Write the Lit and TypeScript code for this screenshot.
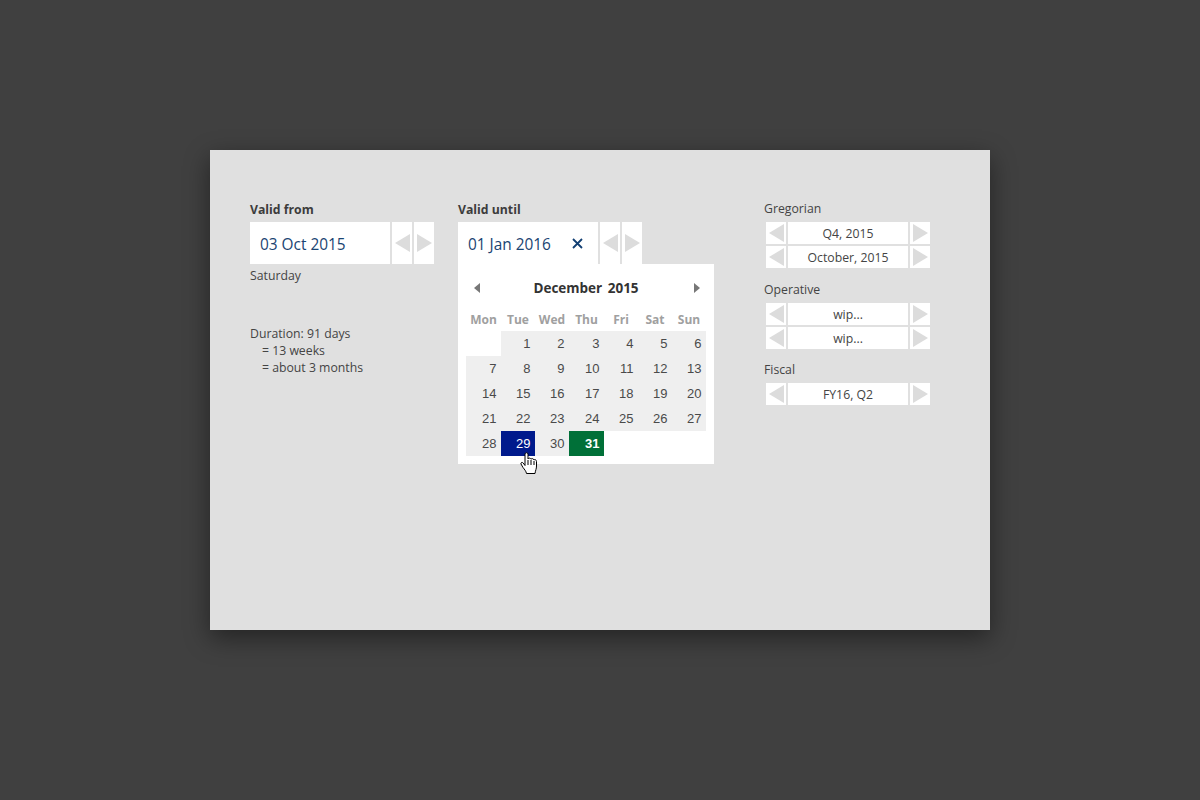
import { LitElement, html, css } from "lit";
import { customElement } from "lit/decorators.js";

const tri = (dir: "l" | "r") => html`<svg class="tri" width="15" height="18" viewBox="0 0 15 18">
  <path d=${dir === "l" ? "M15 0V18L0 9Z" : "M0 0V18L15 9Z"} fill="#dcdcdc"></path>
</svg>`;

const stepper = (label: string) => html`<div class="stepper">
  <div class="step">${tri("l")}</div>
  <div class="value">${label}</div>
  <div class="step">${tri("r")}</div>
</div>`;

const WEEKDAYS = ["Mon", "Tue", "Wed", "Thu", "Fri", "Sat", "Sun"];

@customElement("app-root")
export class AppRoot extends LitElement {
  static styles = css`
    :host {
      display: flex;
      align-items: center;
      justify-content: center;
      box-sizing: border-box;
      height: 800px;
      padding-bottom: 20px;
      background: #404040;
      font-family: "Open Sans", "Noto Sans", sans-serif;
      font-size: 12.25px;
      color: #444;
    }
    .card {
      box-sizing: border-box;
      width: 780px;
      height: 480px;
      background: #e0e0e0;
      box-shadow: 0 8px 24px rgba(0, 0, 0, 0.45);
      padding: 50px 60px 0 40px;
      display: flex;
    }
    .from {
      width: 208px;
    }
    .until {
      width: 306px;
    }
    .side {
      width: 166px;
    }
    .label {
      height: 22px;
      line-height: 19px;
    }
    .bold {
      font-weight: 700;
      color: #3c3c3c;
    }
    .picker {
      display: flex;
      gap: 2px;
      height: 42px;
    }
    .input {
      box-sizing: border-box;
      width: 140px;
      background: #fff;
      display: flex;
      align-items: center;
      justify-content: space-between;
      padding: 2px 15px 0 10px;
      font-size: 15.4px;
      color: #1a4472;
    }
    .input svg {
      margin-top: -1px;
    }
    .btn {
      width: 20px;
      background: #fff;
      display: flex;
      align-items: center;
      justify-content: center;
    }
    .weekday {
      margin-top: 3px;
      line-height: 17px;
    }
    .duration {
      margin-top: 41px;
      line-height: 17px;
    }
    .indent {
      padding-left: 12px;
    }
    .calendar {
      box-sizing: border-box;
      width: 256px;
      height: 200px;
      background: #fff;
      padding: 0 8px;
    }
    .title {
      height: 48px;
      display: flex;
      align-items: center;
      justify-content: space-between;
      padding: 0 6px 0 8px;
      font-size: 13.5px;
      font-weight: 700;
      color: #333;
      word-spacing: 2px;
    }
    .title span {
      margin-right: 2px;
    }
    .head,
    .grid {
      display: grid;
      grid-template-columns: 35px 34px 34px 35px 34px 34px 34px;
      width: 240px;
    }
    .head {
      height: 19px;
      font-weight: 700;
      font-size: 12px;
      color: #a0a0a0;
      text-align: center;
      line-height: 16px;
    }
    .grid {
      grid-auto-rows: 25px;
      font-family: "Liberation Sans", Arial, sans-serif;
      font-size: 13px;
      line-height: 25px;
      text-align: right;
    }
    .grid div {
      padding-right: 4.5px;
      background: #efefef;
      color: #4a4a4a;
    }
    .grid .blank {
      background: none;
    }
    .grid .picked {
      background: #001a8c;
      color: #fff;
    }
    .grid .end {
      background: #007038;
      color: #fff;
      font-weight: 700;
    }
    .wrap {
      position: relative;
    }
    .hand {
      position: absolute;
      left: 62px;
      top: 252px;
    }
    .stepper {
      display: flex;
      gap: 2px;
      height: 22px;
      margin-left: 2px;
    }
    .stepper + .stepper {
      margin-top: 2px;
    }
    .step {
      width: 20px;
      background: #fff;
      display: flex;
      align-items: center;
      justify-content: center;
    }
    .value {
      width: 120px;
      background: #fff;
      text-align: center;
      line-height: 23px;
    }
    .group {
      margin-bottom: 12.6px;
    }
    .side .label {
      line-height: 18.6px;
    }
  `;

  render() {
    const days: unknown[] = [html`<div class="blank"></div>`];
    for (let d = 1; d <= 31; d++) {
      const cls = d === 29 ? "picked" : d === 31 ? "end" : "";
      days.push(html`<div class=${cls}>${d}</div>`);
    }
    return html`<div class="card">
      <div class="from">
        <div class="label bold">Valid from</div>
        <div class="picker">
          <div class="input">03 Oct 2015</div>
          <div class="btn">${tri("l")}</div>
          <div class="btn">${tri("r")}</div>
        </div>
        <div class="weekday">Saturday</div>
        <div class="duration">
          <div>Duration: 91 days</div>
          <div class="indent">= 13 weeks</div>
          <div class="indent">= about 3 months</div>
        </div>
      </div>
      <div class="until wrap">
        <div class="label bold">Valid until</div>
        <div class="picker">
          <div class="input">
            01 Jan 2016
            <svg width="11" height="11" viewBox="0 0 11 11">
              <path d="M1 1L10 10M10 1L1 10" stroke="#123f73" stroke-width="1.8" fill="none"></path>
            </svg>
          </div>
          <div class="btn">${tri("l")}</div>
          <div class="btn">${tri("r")}</div>
        </div>
        <div class="calendar">
          <div class="title">
            <svg width="6" height="10" viewBox="0 0 6 10"><path d="M6 0V10L0 5Z" fill="#777"></path></svg>
            <span>December 2015</span>
            <svg width="6" height="10" viewBox="0 0 6 10"><path d="M0 0V10L6 5Z" fill="#777"></path></svg>
          </div>
          <div class="head">${WEEKDAYS.map((d) => html`<span>${d}</span>`)}</div>
          <div class="grid">${days}</div>
        </div>
        <svg class="hand" width="18" height="23" viewBox="0 0 18 23">
          <path
            d="M5 2C5 .3 8 .3 8 2V7C8.5 5.8 10.5 5.8 11 7.2C11.5 6.2 13.5 6.4 14 8C14.5 7.2 16.5 7.6 16.5 9.5V14C16.5 17 15.5 18 15 21.5H6.5C6 19 4.5 17.5 3 15.5L1 12C.4 10.5 2.2 9.8 3.2 11L5 13.5Z"
            fill="#fff"
            stroke="#000"
            stroke-width="1"
          ></path>
          <path d="M8 8V13M11 8V13M14 9V13" stroke="#000" stroke-width="1" fill="none"></path>
        </svg>
      </div>
      <div class="side">
        <div class="group">
          <div class="label">Gregorian</div>
          ${stepper("Q4, 2015")} ${stepper("October, 2015")}
        </div>
        <div class="group">
          <div class="label">Operative</div>
          ${stepper("wip...")} ${stepper("wip...")}
        </div>
        <div class="group">
          <div class="label">Fiscal</div>
          ${stepper("FY16, Q2")}
        </div>
      </div>
    </div>`;
  }
}
